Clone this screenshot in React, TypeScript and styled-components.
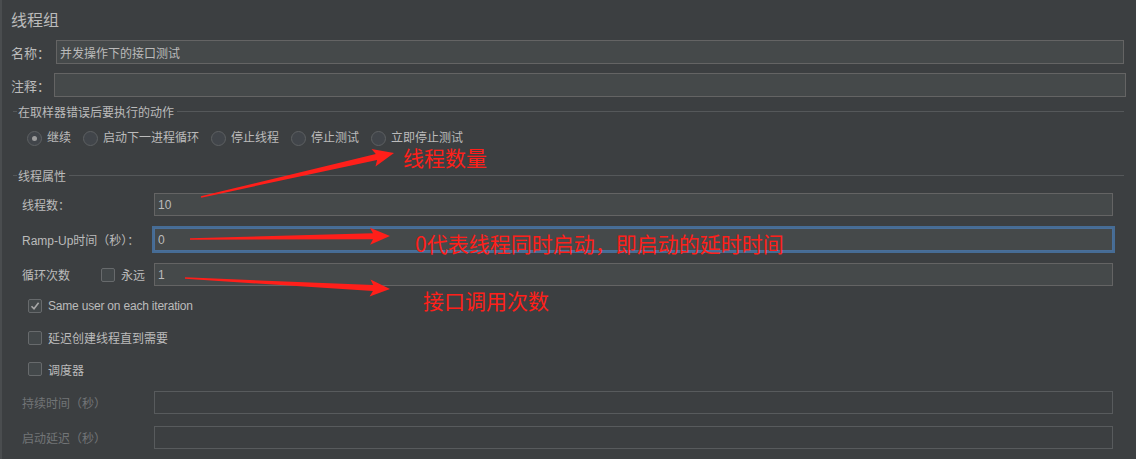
import React from 'react';
import styled, { createGlobalStyle } from 'styled-components';

const GlobalStyle = createGlobalStyle`
  html, body { margin: 0; padding: 0; background: #3c3f41; }
  body {
    font-family: "Liberation Sans", "Noto Sans CJK SC", sans-serif;
    font-size: 12px;
    color: #bbbbbb;
  }
  * { box-sizing: border-box; }
`;

const Page = styled.div`
  position: relative;
  width: 1136px;
  height: 459px;
  overflow: hidden;
  padding: 10px 10px 0 11px;
  background: #3c3f41;
  box-shadow: inset 2px 0 0 #4a4d4f, inset 1px 0 0 #3c3f41;
  display: flex;
  flex-direction: column;
`;

const Title = styled.div`
  font-size: 16px;
  line-height: 21px;
  height: 21px;
`;

const FieldRow = styled.div<{ $right: number }>`
  display: flex;
  align-items: center;
  height: 24px;
  margin-top: 9px;
  margin-right: ${(p) => p.$right}px;
`;

const FieldLabel = styled.span<{ $w: number }>`
  width: ${(p) => p.$w}px;
  flex: none;
  font-size: 13px;
`;

const TextBox = styled.div<{ $focus?: boolean; $disabled?: boolean }>`
  flex: 1;
  height: 100%;
  padding: 0 3px;
  display: flex;
  align-items: center;
  font-size: 12px;
  color: #bbbbbb;
  background: ${(p) => (p.$disabled ? '#3c3f41' : '#45494a')};
  border: 1px solid ${(p) => (p.$focus ? '#4a6f99' : p.$disabled ? '#585b5d' : '#646464')};
  box-shadow: ${(p) => (p.$focus ? '0 0 0 2px #466c95' : 'none')};
`;

const Frame = styled.div<{ $top: number }>`
  margin: ${(p) => p.$top}px 2px 0 2px;
  display: flex;
  flex-direction: column;
`;

const FrameHeader = styled.div`
  display: flex;
  align-items: center;
  height: 16px;
  font-size: 12px;
  &::before {
    content: '';
    width: 4px;
    height: 1px;
    background: #55585a;
    margin-right: 1px;
  }
  &::after {
    content: '';
    flex: 1;
    height: 1px;
    background: #55585a;
    margin-left: 3px;
  }
`;

const RadioRow = styled.div`
  display: flex;
  align-items: center;
  gap: 12px;
  height: 15px;
  margin-top: 12px;
  padding-left: 14px;
`;

const RadioItem = styled.label`
  display: flex;
  align-items: center;
  gap: 5px;
  line-height: 15px;
`;

const RadioCircle = styled.span<{ $on?: boolean }>`
  width: 15px;
  height: 15px;
  border-radius: 50%;
  border: 1px solid #5d6062;
  background: #41454a;
  display: flex;
  align-items: center;
  justify-content: center;
  &::after {
    content: '';
    width: 5px;
    height: 5px;
    border-radius: 50%;
    background: ${(p) => (p.$on ? '#9c9c9c' : 'transparent')};
  }
`;

const PropsGrid = styled.div<{ $top: number }>`
  display: grid;
  grid-template-columns: 132px 1fr;
  grid-auto-rows: 23px;
  row-gap: 12px;
  align-items: center;
  margin-top: ${(p) => p.$top}px;
  padding: 0 11px 0 9px;
`;

const GridLabel = styled.span<{ $disabled?: boolean }>`
  font-size: 12px;
  color: ${(p) => (p.$disabled ? '#727577' : '#bbbbbb')};
  display: flex;
  align-items: center;
`;

const LoopLabel = styled.span`
  width: 79px;
  flex: none;
`;

const CheckList = styled.div`
  display: flex;
  flex-direction: column;
  gap: 15.5px;
  margin-top: 12px;
  padding-left: 15px;
`;

const CheckItem = styled.label`
  display: flex;
  align-items: center;
  gap: 6px;
  height: 16px;
`;

const LatinText = styled.span`
  letter-spacing: -0.2px;
`;

const Box = styled.span`
  width: 14px;
  height: 14px;
  flex: none;
  border: 1px solid #676a6c;
  border-radius: 2px;
  background: #43484a;
  display: flex;
  align-items: center;
  justify-content: center;
`;

const Overlay = styled.div`
  position: absolute;
  inset: 0;
  pointer-events: none;
`;

const Note = styled.span<{ $x: number; $y: number }>`
  position: absolute;
  left: ${(p) => p.$x}px;
  top: ${(p) => p.$y}px;
  font-family: "Noto Sans CJK SC", sans-serif;
  font-size: 21px;
  line-height: 20px;
  color: #ff1f1a;
  white-space: nowrap;
`;

type Pt = [number, number];

function arrowPoints(tail: Pt, tip: Pt, w0: number, w1: number, headW: number, headL: number) {
  const dx = tip[0] - tail[0];
  const dy = tip[1] - tail[1];
  const len = Math.hypot(dx, dy);
  const ux = dx / len;
  const uy = dy / len;
  const nx = -uy;
  const ny = ux;
  const bx = tip[0] - ux * headL;
  const by = tip[1] - uy * headL;
  const p = (x: number, y: number) => `${x.toFixed(1)},${y.toFixed(1)}`;
  return [
    p(tail[0] + (nx * w0) / 2, tail[1] + (ny * w0) / 2),
    p(bx + (nx * w1) / 2, by + (ny * w1) / 2),
    p(bx + (nx * headW) / 2 - ux * 3, by + (ny * headW) / 2 - uy * 3),
    p(tip[0], tip[1]),
    p(bx - (nx * headW) / 2 - ux * 3, by - (ny * headW) / 2 - uy * 3),
    p(bx - (nx * w1) / 2, by - (ny * w1) / 2),
    p(tail[0] - (nx * w0) / 2, tail[1] - (ny * w0) / 2),
  ].join(' ');
}

const Check = () => (
  <svg width="10" height="10" viewBox="0 0 10 10">
    <polyline points="1.5,5.2 4,7.8 8.6,1.8" fill="none" stroke="#a8a8a8" strokeWidth="1.6" />
  </svg>
);

const radios = ['继续', '启动下一进程循环', '停止线程', '停止测试', '立即停止测试'];

export default function App() {
  return (
    <>
      <GlobalStyle />
      <Page>
        <Title>线程组</Title>
        <FieldRow $right={2}>
          <FieldLabel $w={45}>名称：</FieldLabel>
          <TextBox>并发操作下的接口测试</TextBox>
        </FieldRow>
        <FieldRow $right={0}>
          <FieldLabel $w={43}>注释：</FieldLabel>
          <TextBox />
        </FieldRow>

        <Frame $top={6}>
          <FrameHeader>在取样器错误后要执行的动作</FrameHeader>
          <RadioRow>
            {radios.map((r, i) => (
              <RadioItem key={r}>
                <RadioCircle $on={i === 0} />
                {r}
              </RadioItem>
            ))}
          </RadioRow>
        </Frame>

        <Frame $top={21}>
          <FrameHeader>线程属性</FrameHeader>
          <PropsGrid $top={10}>
            <GridLabel>线程数：</GridLabel>
            <TextBox>10</TextBox>
            <GridLabel>Ramp-Up时间（秒）：</GridLabel>
            <TextBox $focus>0</TextBox>
            <GridLabel>
              <LoopLabel>循环次数</LoopLabel>
              <CheckItem>
                <Box />
                永远
              </CheckItem>
            </GridLabel>
            <TextBox>1</TextBox>
          </PropsGrid>
          <CheckList>
            <CheckItem>
              <Box>
                <Check />
              </Box>
              <LatinText>Same user on each iteration</LatinText>
            </CheckItem>
            <CheckItem>
              <Box />
              延迟创建线程直到需要
            </CheckItem>
            <CheckItem>
              <Box />
              调度器
            </CheckItem>
          </CheckList>
          <PropsGrid $top={14}>
            <GridLabel $disabled>持续时间（秒）</GridLabel>
            <TextBox $disabled />
            <GridLabel $disabled>启动延迟（秒）</GridLabel>
            <TextBox $disabled />
          </PropsGrid>
        </Frame>

        <Overlay>
          <svg width="1136" height="459" viewBox="0 0 1136 459">
            <polygon points={arrowPoints([201, 197], [394, 153], 1.5, 6, 18, 18)} fill="#ff1f1a" />
            <polygon points={arrowPoints([190, 239], [390, 236], 1.5, 6, 17, 17)} fill="#ff1f1a" />
            <polygon points={arrowPoints([185, 278], [390, 289], 1.5, 6, 17, 17)} fill="#ff1f1a" />
          </svg>
          <Note $x={403} $y={147}>线程数量</Note>
          <Note $x={415} $y={233}>0代表线程同时启动，即启动的延时时间</Note>
          <Note $x={423} $y={290}>接口调用次数</Note>
        </Overlay>
      </Page>
    </>
  );
}
